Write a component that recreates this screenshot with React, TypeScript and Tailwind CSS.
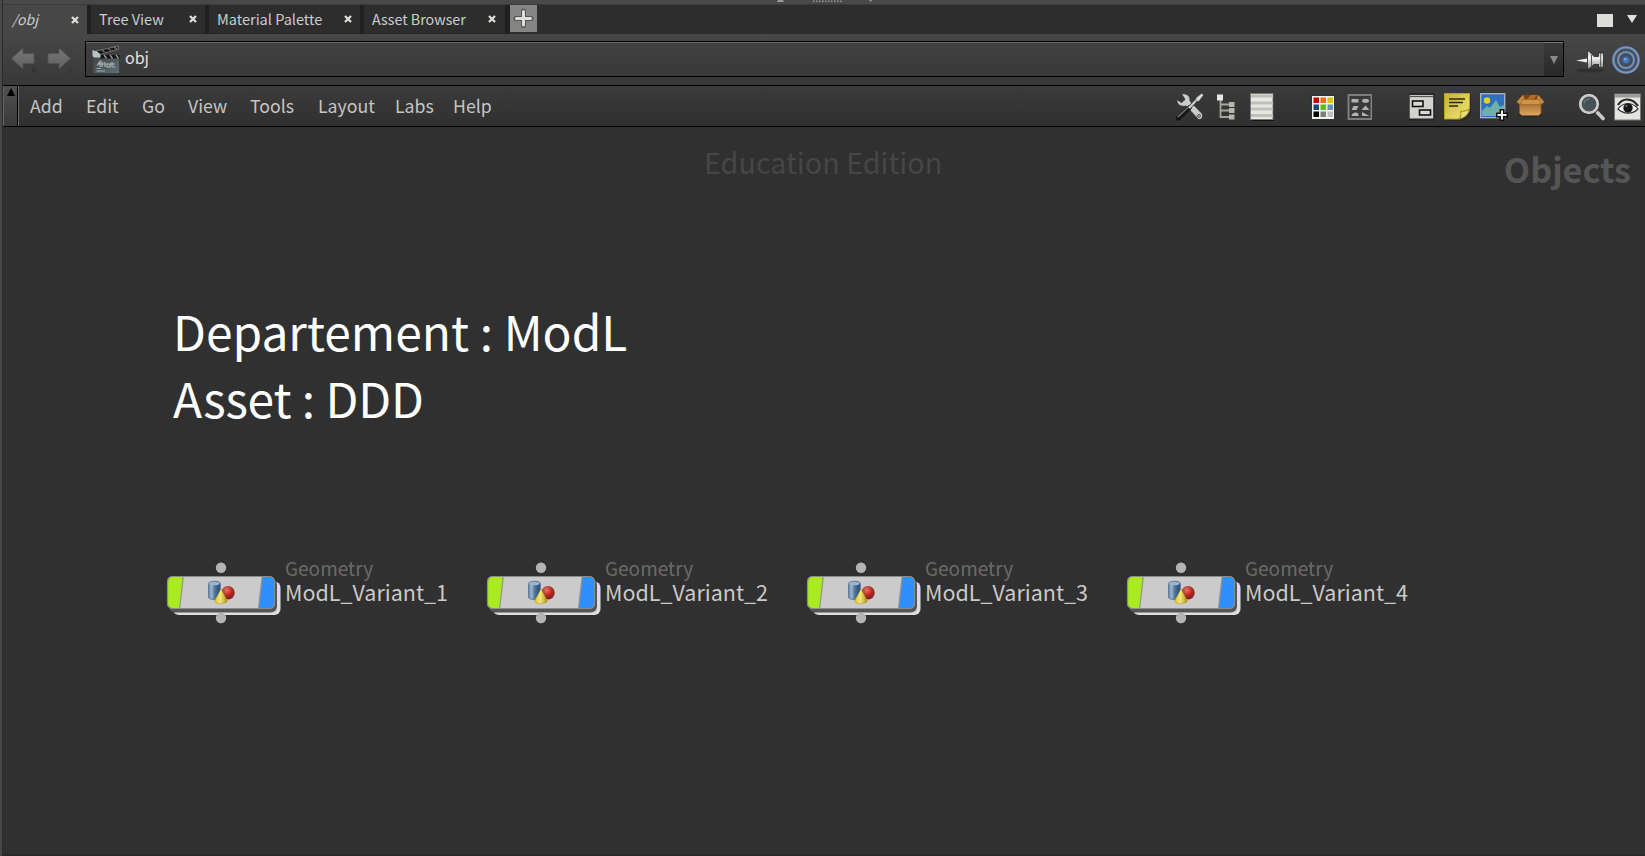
import React from "react";

const FONT = "font-['Noto_Sans_CJK_SC','Noto_Sans',sans-serif]";

function CloseMark() {
  return (
    <svg width="8" height="8" viewBox="0 0 8 8" className="shrink-0">
      <path d="M1 1L7 7M7 1L1 7" stroke="#dedfda" strokeWidth="2.3" />
    </svg>
  );
}

type TabProps = { label: string; width: string; pad: string; text: string; active?: boolean };

function Tab({ label, width, pad, text, active }: TabProps) {
  return (
    <div
      className={`flex shrink-0 items-center justify-between ${width} ${pad} ${
        active
          ? "h-[30px] bg-[#474747]"
          : "h-[29px] border-b border-[#232323] border-l-4 border-l-[#202020] bg-[#2d2d2d]"
      }`}
    >
      <span className={`mb-[2px] whitespace-nowrap leading-[27px] text-[#cccccc] ${text}`}>{label}</span>
      <CloseMark />
    </div>
  );
}

function NavArrow({ flip }: { flip?: boolean }) {
  return (
    <svg width="28" height="28" viewBox="0 0 28 28" className="shrink-0">
      <defs>
        <linearGradient id="nav" x1="0" y1="0" x2="0" y2="1">
          <stop offset="0" stopColor="#777" />
          <stop offset="1" stopColor="#606060" />
        </linearGradient>
      </defs>
      <g transform={flip ? "translate(24 0) scale(-1 1)" : ""}>
        <path d="M0.500 11.500L12 1V6.500H23V16.500H12V22Z" fill="url(#nav)" stroke="#505050" strokeWidth="0.8" />
      </g>
      <path d="M21 18.500L27 23L21 27Z" fill="#373737" />
    </svg>
  );
}

function Clapper() {
  return (
    <svg width="28" height="30" viewBox="0 0 28 30" className="shrink-0">
      <defs>
        <linearGradient id="slate" x1="0" y1="0" x2="1" y2="1">
          <stop offset="0" stopColor="#3c4444" />
          <stop offset="1" stopColor="#607078" />
        </linearGradient>
      </defs>
      <path d="M4 6L26.500 1V4L8 9.500Z" fill="#151515" stroke="#858585" strokeWidth="0.8" />
      <path d="M10 5L12.500 7M16 3.700L19 5.300M22 2.300L25 3.700" stroke="#777" strokeWidth="1.300" />
      <rect x="1" y="10" width="26.500" height="18.500" fill="url(#slate)" stroke="#374141" />
      <rect x="8" y="10" width="19.500" height="3.500" fill="#151515" />
      <path d="M12 10l2.500 3.500M18 10l2.500 3.500M24 10l2.500 3.500" stroke="#999" strokeWidth="1.300" />
      <path d="M0.500 5L5 6.500L8.500 9.500V12.500H2L0.500 11Z" fill="#b9c3c6" />
      <path d="M5 20.500L8 16.500V22M7 19H13M10 16V22M13 17V22M15 22V19H18V22H15M20 17V22M18.500 19H23M23 22H20.500" stroke="#b4bcba" strokeWidth="1.100" fill="none" />
      <path d="M4.500 23.500H9M4.500 26H13" stroke="#a3acac" strokeWidth="1" />
    </svg>
  );
}

function Pin() {
  return (
    <svg width="28" height="24" viewBox="0 0 28 24" className="shrink-0">
      <defs>
        <linearGradient id="pin" x1="0" y1="0" x2="0" y2="1">
          <stop offset="0" stopColor="#bdbdbd" />
          <stop offset="0.400" stopColor="#f0f0f0" />
          <stop offset="1" stopColor="#858585" />
        </linearGradient>
      </defs>
      <ellipse cx="14" cy="21.500" rx="13.500" ry="2" fill="#303030" />
      <path d="M0 11.500L11 9.500V13.500Z" fill="#eee" />
      <path d="M11.500 1.500C14 2.500 16 5.500 18 7.500H22.500V4H27.500V18.500H22.500V15.500H18C16 17 14 19.500 11.500 20.500Z" fill="url(#pin)" stroke="#262626" strokeWidth="0.800" />
      <path d="M24.700 4V18.500M15.500 6V17" stroke="#555" strokeWidth="1" />
    </svg>
  );
}

function Target() {
  return (
    <svg width="28" height="28" viewBox="0 0 28 28" className="shrink-0">
      <circle cx="14" cy="14" r="14" fill="#56677f" />
      <circle cx="14" cy="14" r="11" fill="#484d55" />
      <circle cx="14" cy="14" r="12.600" fill="none" stroke="#7798c6" strokeWidth="1.900" />
      <circle cx="14" cy="14" r="8" fill="none" stroke="#7091c0" strokeWidth="2.200" />
      <circle cx="14" cy="14" r="3.500" fill="#3973c4" />
      <circle cx="13.300" cy="13.300" r="1.400" fill="#76a3df" />
    </svg>
  );
}

function ToolsIcon() {
  return (
    <svg width="28" height="28" viewBox="0 0 28 28">
      <path d="M5.500 1C10 -0.500 15 3 14 8L26 20.500C27.500 23 26 27 22.500 26.500L10 13C5 14.500 0 11 1 6.500L5.500 9.500L9 6.500Z" fill="#c9cbc8" stroke="#2b3032" strokeWidth="0.900" />
      <circle cx="23" cy="22.800" r="1.500" fill="#aaa" stroke="#555" />
      <path d="M2.500 25L13 15" stroke="#151515" strokeWidth="5" strokeLinecap="round" />
      <path d="M1.800 24L13 13.500" stroke="#6e7374" strokeWidth="1.500" />
      <path d="M13 15L21 6.500" stroke="#333" strokeWidth="3.500" />
      <path d="M13 15L21 6.500" stroke="#d4d4cc" strokeWidth="2" />
      <path d="M20 5L25.500 0.500L27.500 2L23 8L20 8.500Z" fill="#deded7" stroke="#555" strokeWidth="0.500" />
    </svg>
  );
}

function TreeIcon() {
  return (
    <svg width="20" height="28" viewBox="0 0 20 28">
      <path d="M3.500 7V24H12M3.500 11.500H12M3.500 17.500H12" stroke="#a4a79d" strokeWidth="1.800" fill="none" />
      <rect x="0" y="1.500" width="6" height="6" fill="#e8e8e8" />
      <rect x="12" y="9" width="5.500" height="5" fill="#b6b8ae" />
      <rect x="12" y="15" width="5.500" height="5" fill="#b6b8ae" />
      <rect x="12" y="21.500" width="5.500" height="5" fill="#b6b8ae" />
    </svg>
  );
}

function ListIcon() {
  return (
    <svg width="25" height="28" viewBox="0 0 25 28">
      <rect x="2" y="2" width="22" height="26" fill="#161616" />
      <rect x="0.500" y="0.500" width="22.500" height="26" fill="#e7e7e3" stroke="#777973" />
      <path d="M1 3H23M1 10H23M1 16H23M1 22.500H23" stroke="#bfc1b7" strokeWidth="3" />
    </svg>
  );
}

const PALETTE = ["#c60000", "#e67200", "#dcc400", "#1f477f", "#5fbd11", "#6892bc", "#000000", "#7f7f7b", "#c0c1b9"];

function PaletteIcon() {
  return (
    <svg width="24" height="25" viewBox="0 0 24 25">
      <rect x="0.500" y="0.500" width="23" height="24" fill="#f3f3ef" stroke="#27363d" />
      {PALETTE.map((c, i) => (
        <rect key={c} x={2.5 + (i % 3) * 7} y={2.5 + Math.floor(i / 3) * 7} width="5.500" height="5.500" fill={c} />
      ))}
    </svg>
  );
}

function ShapesIcon() {
  return (
    <svg width="25" height="26" viewBox="0 0 25 26">
      <rect x="1.500" y="1" width="23" height="24" fill="#393939" stroke="#858585" strokeWidth="1.800" />
      <g fill="#b1b1b1" transform="translate(0.500 0)">
        <rect x="4" y="5" width="7" height="3.500" />
        <ellipse cx="18" cy="6.800" rx="3.500" ry="2" />
        <path d="M6 12H11L9 16H4Z" />
        <path d="M18 11.500L22 16H14Z" />
        <path d="M4 22C4 18 11 17 11 21V22Z" />
        <path d="M14.500 18L22 22H14.500Z" />
      </g>
    </svg>
  );
}

function BoxesIcon() {
  return (
    <svg width="27" height="28" viewBox="0 0 27 28">
      <rect x="0" y="0" width="26" height="28" fill="#25292a" />
      <rect x="0.700" y="2" width="23.500" height="23.500" fill="#d2d2cf" />
      <path d="M0 3.500H24.500" stroke="#555" strokeWidth="1.200" />
      <rect x="3.500" y="8" width="10.500" height="5.500" fill="#d8d8d5" stroke="#111" strokeWidth="1.600" />
      <rect x="10.500" y="17" width="11" height="5" fill="#d8d8d5" stroke="#111" strokeWidth="1.600" />
    </svg>
  );
}

function NoteIcon() {
  return (
    <svg width="27" height="28" viewBox="0 0 27 28">
      <defs>
        <linearGradient id="note" x1="0" y1="0" x2="1" y2="1">
          <stop offset="0" stopColor="#c6b22e" />
          <stop offset="0.700" stopColor="#e4d768" />
          <stop offset="1" stopColor="#d9c94e" />
        </linearGradient>
      </defs>
      <path d="M2 2H27V22L21 28H2Z" fill="#292929" />
      <path d="M0.500 0.500H25.500V17L16 26H0.500Z" fill="url(#note)" stroke="#b8a428" />
      <path d="M15 26C18 23 16 20 17 18C20 19 23 17 25.500 16C25 21 21 25 15 26Z" fill="#e7dd78" stroke="#958319" />
      <path d="M5 6H21M5 9.500H19M5 13H14" stroke="#302b0b" strokeWidth="1.700" />
    </svg>
  );
}

function ImageIcon() {
  return (
    <svg width="28" height="28" viewBox="0 0 28 28">
      <rect x="0.700" y="0.700" width="24" height="24" fill="#2f6fc0" stroke="#a9b7bd" strokeWidth="1.300" />
      <circle cx="7" cy="7.500" r="3.200" fill="#e4d422" />
      <path d="M2 18L7 13L10 15L16 7L20 14L24 12V23H2Z" fill="#6eb0a8" />
      <path d="M22 16V28M16 22H28" stroke="#101010" strokeWidth="5" />
      <path d="M22 17.500V26.500M17.500 22H26.500" stroke="#f0f0ed" strokeWidth="2" />
    </svg>
  );
}

function PackageIcon() {
  return (
    <svg width="29" height="24" viewBox="0 0 29 24">
      <defs>
        <linearGradient id="pack" x1="0" y1="0" x2="0" y2="1">
          <stop offset="0" stopColor="#a96c2a" />
          <stop offset="1" stopColor="#dda864" />
        </linearGradient>
      </defs>
      <ellipse cx="14.500" cy="21" rx="13" ry="2.500" fill="#2b2b2b" />
      <path d="M3.500 9H25V19.500L22.500 21.500H6L3.500 19.500Z" fill="url(#pack)" stroke="#8a5a22" strokeWidth="0.800" />
      <path d="M7 0.800H22L25 6H4Z" fill="#7d430f" />
      <path d="M15 1H21L18 5H11Z" fill="#b06b27" />
      <path d="M7 0.800L0.700 8L4 10.500L8.500 5M22 0.800L28.300 8L25 10.500L21 5" fill="#c98c40" stroke="#94602b" strokeWidth="0.700" />
      <path d="M6 5.500H23.500L24.500 10.500H4.500Z" fill="#cf9448" stroke="#99662e" strokeWidth="0.700" />
    </svg>
  );
}

function SearchIcon() {
  return (
    <svg width="27" height="28" viewBox="0 0 27 28">
      <path d="M17 17L25 25.500" stroke="#c8c8c4" strokeWidth="3.600" strokeLinecap="round" />
      <circle cx="11" cy="11" r="9" fill="#54666c" stroke="#292d2d" strokeWidth="4" />
      <circle cx="11" cy="11" r="8.800" fill="#465258" stroke="#cacbc7" strokeWidth="2.800" />
      <path d="M6 10C7 7 9 6 12 6" stroke="#62757b" strokeWidth="1.500" fill="none" />
    </svg>
  );
}

function EyeIcon() {
  return (
    <svg width="27" height="28" viewBox="0 0 27 28">
      <rect x="0.500" y="1" width="26" height="26" fill="#e3e3e0" stroke="#777" />
      <rect x="1" y="1" width="25" height="3.500" fill="#9a9a97" />
      <path d="M4 12C8 5 18 4 24 13" fill="none" stroke="#252525" strokeWidth="2.200" />
      <path d="M4 16C9 9 19 9 24 16C18 22 9 21 4 16Z" fill="#f5f5f5" stroke="#333" strokeWidth="1.200" />
      <circle cx="14" cy="15" r="4.700" fill="#151515" />
      <circle cx="12.500" cy="13" r="1" fill="#777" />
    </svg>
  );
}

function NodeShape() {
  return (
    <svg width="116" height="64" viewBox="0 0 116 64" className="shrink-0">
      <defs>
        <linearGradient id="cyl" x1="0" y1="0" x2="1" y2="0">
          <stop offset="0" stopColor="#5c7fa8" />
          <stop offset="0.250" stopColor="#9cb4ce" />
          <stop offset="0.550" stopColor="#4a719c" />
          <stop offset="1" stopColor="#26466e" />
        </linearGradient>
        <radialGradient id="ball" cx="0.400" cy="0.300" r="0.700">
          <stop offset="0" stopColor="#e07b6c" />
          <stop offset="0.500" stopColor="#bb3028" />
          <stop offset="1" stopColor="#871512" />
        </radialGradient>
        <linearGradient id="cone" x1="0" y1="0" x2="1" y2="0">
          <stop offset="0" stopColor="#d7bd32" />
          <stop offset="0.450" stopColor="#f5e976" />
          <stop offset="1" stopColor="#a68b12" />
        </linearGradient>
        <clipPath id="body">
          <rect x="1.500" y="16.500" width="107" height="32" rx="5" />
        </clipPath>
      </defs>
      <rect x="7" y="21.500" width="107.500" height="33.500" rx="6" fill="#dedede" />
      <rect x="3" y="18.500" width="108" height="34" rx="6" fill="#555555" />
      <circle cx="55" cy="7.700" r="5.200" fill="#b5b5b5" />
      <g clipPath="url(#body)">
        <rect x="1" y="16" width="110" height="34" fill="#cbcbcb" />
        <path d="M0 16H17.300L13.500 50H0Z" fill="#a9ea20" />
        <path d="M96.300 16H111V50H92.300Z" fill="#308dfc" />
        <path d="M17.300 16L13.500 50M96.300 16L92.300 50" stroke="#929292" strokeWidth="1.200" />
      </g>
      <rect x="1.500" y="16.500" width="107" height="32" rx="5" fill="none" stroke="#8c8c8c" strokeWidth="1.200" />
      <path d="M42.500 23.500C42.500 20.500 54.300 20.500 54.300 23.500V37C54.300 40.500 42.500 40.500 42.500 37Z" fill="url(#cyl)" stroke="#4c6b8b" strokeWidth="0.700" />
      <ellipse cx="48.400" cy="23.500" rx="5.300" ry="1.800" fill="#a0b6cb" />
      <circle cx="62" cy="32.700" r="6.700" fill="url(#ball)" />
      <path d="M55 29L61.500 41C60 44.500 50 44.500 48.500 41Z" fill="url(#cone)" stroke="#a99637" strokeWidth="0.500" />
      <circle cx="55" cy="58" r="5.200" fill="#b5b5b5" />
    </svg>
  );
}

function GeometryNode({ name }: { name: string }) {
  return (
    <div className="flex w-[320px] shrink-0">
      <NodeShape />
      <div className="flex flex-col pl-[3px] whitespace-nowrap">
        <span className="text-[19px] leading-[16px] text-[#6a6a6a]">Geometry</span>
        <span className="pt-[4px] text-[21.5px] leading-[24px] text-[#cacaca]">{name}</span>
      </div>
    </div>
  );
}

const MENU = [
  { label: "Add", width: "w-[56px]" },
  { label: "Edit", width: "w-[56px]" },
  { label: "Go", width: "w-[46px]" },
  { label: "View", width: "w-[62px]" },
  { label: "Tools", width: "w-[68px]" },
  { label: "Layout", width: "w-[77px]" },
  { label: "Labs", width: "w-[58px]" },
  { label: "Help", width: "w-[50px]" },
];

export default function App() {
  return (
    <div className={`flex h-[856px] w-[1645px] overflow-hidden bg-[#303030] ${FONT}`}>
      <div className="w-[3px] shrink-0 border-r border-[#2b2b2b] bg-[#484848]" />
      <div className="flex w-[1642px] flex-col">
        <div className="flex h-1 shrink-0 bg-[#494949] pl-[774px]">
          <svg width="100" height="4" viewBox="0 0 100 4">
            <path d="M0 2L1 0H6L7 2Z" fill="#999" />
            <path d="M36 1.200H66" stroke="#999" strokeWidth="1.500" strokeDasharray="1.500 1.500" />
            <path d="M92 0H95L93.500 2Z" fill="#999" />
          </svg>
        </div>
        <div className="flex h-[30px] shrink-0 items-start border-t border-[#3b3b3b] bg-[#2d2d2d]">
          <Tab label="/obj" width="w-[84px]" pad="pl-[9px] pr-[8px]" text="text-[14px] italic" active />
          <Tab label="Tree View" width="w-[118px]" pad="pl-[8px] pr-[8px]" text="text-[14.5px]" />
          <Tab label="Material Palette" width="w-[155px]" pad="pl-[8px] pr-[8px]" text="text-[14.5px]" />
          <Tab label="Asset Browser" width="w-[145px]" pad="pl-[8px] pr-[9px]" text="text-[14.300px]" />
          <div className="h-[29px] w-[5px] bg-[#202020]" />
          <svg width="27" height="27" viewBox="0 0 27 27" className="shrink-0">
            <rect width="27" height="27" fill="#858585" />
            <path d="M13.500 6V20.500M6 13.500H21" stroke="#555" strokeWidth="5" strokeLinecap="round" />
            <path d="M13.500 6.500V20M6.500 13.500H20.500" stroke="#dedfda" strokeWidth="3" strokeLinecap="round" />
          </svg>
          <div className="flex h-[28px] grow items-center justify-end gap-[14px] pr-[8px]">
            <div className="mt-[2px] h-[13px] w-4 bg-[#deded8]" />
            <svg width="10" height="8" viewBox="0 0 10 8"><path d="M0 0H10L5 8Z" fill="#e0e0dc" /></svg>
          </div>
        </div>
        <div className="flex h-[51px] shrink-0 items-start bg-linear-to-b from-[#474747] to-[#383838] pl-[8px] pr-[4px] pt-[7px]">
          <div className="flex gap-[8px] pt-[6px]">
            <NavArrow />
            <NavArrow flip />
          </div>
          <div className="ml-[10px] flex h-[36px] w-[1479px] border border-black bg-linear-to-b from-[#414141] to-[#393939]">
            <div className="flex grow items-start border-t border-[#686868] pl-[6px] pt-[2px]">
              <Clapper />
              <span className="pl-[5px] text-[16px] leading-[25px] text-[#e2e2e2]">obj</span>
            </div>
            <div className="flex w-[19px] items-center justify-center border-t border-[#777] bg-linear-to-b from-[#393939] to-[#292929]">
              <svg width="8" height="8" viewBox="0 0 8 8"><path d="M0 0H8L4 8Z" fill="#898989" /></svg>
            </div>
          </div>
          <div className="flex gap-[8px] pl-[12px] pt-[5px]">
            <div className="pt-[3px]"><Pin /></div>
            <Target />
          </div>
        </div>
        <div className="flex h-[42px] shrink-0 items-center border-y border-black bg-linear-to-b from-[#3b3b3b] to-[#303030]">
          <div className="flex h-full w-[15px] shrink-0 justify-center border-l border-r border-l-[#666] border-r-black bg-linear-to-b from-[#505050] to-[#3a3a3a] pt-[2px]">
            <svg width="8" height="8" viewBox="0 0 8 8"><path d="M0 8H8L4 0Z" fill="#000" /></svg>
          </div>
          <div className="flex h-full grow items-center border-l border-[#696969] pl-[11px]">
            {MENU.map((item) => (
              <span key={item.label} className={`mb-[2px] shrink-0 text-[17.700px] leading-[38px] text-[#c5c5c5] ${item.width}`}>
                {item.label}
              </span>
            ))}
          </div>
          <div className="flex shrink-0 items-center pt-[2px]">
            <div className="w-[41px]"><ToolsIcon /></div>
            <div className="w-[33px]"><TreeIcon /></div>
            <div className="w-[61px]"><ListIcon /></div>
            <div className="w-[36px]"><PaletteIcon /></div>
            <div className="w-[62px]"><ShapesIcon /></div>
            <div className="w-[35px]"><BoxesIcon /></div>
            <div className="w-[36px]"><NoteIcon /></div>
            <div className="w-[36px]"><ImageIcon /></div>
            <div className="w-[62px] pb-[2px]"><PackageIcon /></div>
            <div className="w-[36px]"><SearchIcon /></div>
            <div className="w-[31px]"><EyeIcon /></div>
          </div>
        </div>
        <div className="relative grow border-b-2 border-[#2b2829] bg-[#303030]">
          <div className="absolute left-[701px] top-[13px] whitespace-nowrap text-[28.750px] leading-[44px] text-[#464646]">Education Edition</div>
          <div className="absolute right-[14px] top-[19px] text-[34.200px] font-bold leading-[44px] text-[#555555]">Objects</div>
          <div className="absolute left-[170px] top-[170px] whitespace-nowrap text-[47.900px] leading-[67px] text-white">
            <div>Departement : ModL</div>
            <div className="tracking-[-0.2px]">Asset : DDD</div>
          </div>
          <div className="absolute left-[163px] top-[433px] flex">
            {[1, 2, 3, 4].map((n) => (
              <GeometryNode key={n} name={`ModL_Variant_${n}`} />
            ))}
          </div>
        </div>
      </div>
    </div>
  );
}
